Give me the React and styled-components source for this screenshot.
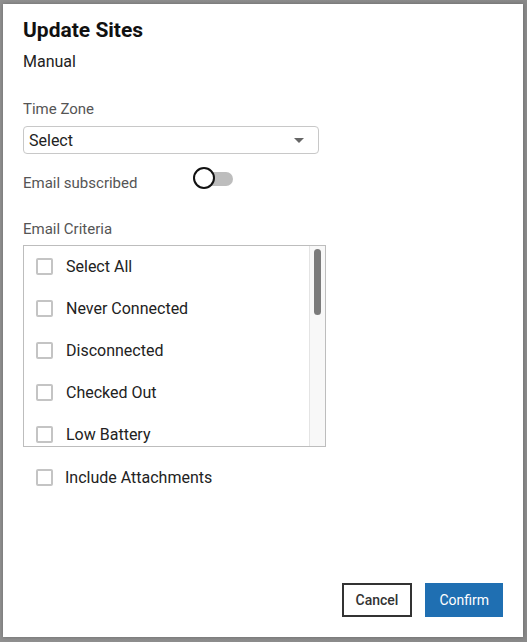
import React, { useState } from 'react';
import styled, { createGlobalStyle } from 'styled-components';

const GlobalStyle = createGlobalStyle`
  html, body {
    margin: 0;
    padding: 0;
    height: 100%;
  }
  body {
    font-family: Roboto, "Liberation Sans", Arial, sans-serif;
    background: #8c8c8c;
  }
`;

//Styled-Components
const Backdrop = styled.div`
  width: 527px;
  height: 642px;
  box-sizing: border-box;
  padding: 4px 4px 5px 3px;
  background: linear-gradient(to right, #909090 0%, #8a8a8a 100%);
  display: flex;
`;

const Dialog = styled.div`
  flex: 1;
  background: #fff;
  display: flex;
  flex-direction: column;
  padding: 14px 20px 20px 20px;
  box-shadow: 0 0 4px rgba(0, 0, 0, 0.25);
`;

const Title = styled.h2`
  margin: 0;
  font-size: 21px;
  font-weight: 700;
  color: #111;
  line-height: 24px;
`;

const SubTitle = styled.div`
  margin-top: 10px;
  font-size: 16px;
  color: #222;
  line-height: 20px;
`;

const Label = styled.div`
  font-size: 15px;
  color: #555;
  line-height: 18px;
  margin-top: ${p => p.top || 0}px;
`;

const SelectBox = styled.div`
  margin-top: 8px;
  width: 296px;
  height: 28px;
  box-sizing: border-box;
  border: 1px solid #c8c8c8;
  border-radius: 4px;
  display: flex;
  align-items: center;
  justify-content: space-between;
  padding: 0 14px 0 5px;
  font-size: 16px;
  color: #222;
`;

const Caret = styled.span`
  width: 0;
  height: 0;
  border-left: 5px solid transparent;
  border-right: 5px solid transparent;
  border-top: 5px solid #666;
`;

const ToggleRow = styled.div`
  margin-top: 13px;
  display: flex;
  align-items: center;
  height: 24px;
`;

const ToggleLabel = styled.div`
  font-size: 15px;
  color: #555;
  width: 170px;
  margin-top: 8px;
`;

const Track = styled.div`
  position: relative;
  width: 38px;
  height: 14px;
  border-radius: 7px;
  background: #bdbdbd;
  margin-left: 2px;
`;

const Knob = styled.div`
  position: absolute;
  left: -2px;
  top: -5px;
  width: 22px;
  height: 22px;
  box-sizing: border-box;
  border: 2px solid #111;
  border-radius: 50%;
  background: #fff;
`;

const ListBox = styled.div`
  margin-top: 7px;
  width: 303px;
  height: 202px;
  box-sizing: border-box;
  border: 1px solid #bdbdbd;
  display: flex;
  overflow: hidden;
`;

const ListItems = styled.div`
  flex: 1;
  display: flex;
  flex-direction: column;
  margin-top: -1px;
`;

const ScrollTrack = styled.div`
  width: 15px;
  background: #f8f8f8;
  border-left: 1px solid #e4e4e4;
  display: flex;
  justify-content: center;
  padding-top: 3px;
`;

const ScrollThumb = styled.div`
  width: 7px;
  height: 66px;
  border-radius: 4px;
  background: #7b7b7b;
`;

const CheckRow = styled.label`
  display: flex;
  align-items: center;
  height: 42px;
  flex-shrink: 0;
  margin-top: ${p => p.top || 0}px;
  padding-left: ${p => p.indent || 12}px;
  font-size: 16px;
  color: #222;
  cursor: pointer;
`;

const Box = styled.span`
  width: 17px;
  height: 17px;
  box-sizing: border-box;
  border: 2px solid #c4c4c4;
  border-radius: 2px;
  margin-right: ${p => p.gap || 13}px;
  background: ${p => (p.checked ? '#1f6fb2' : '#fff')};
`;

const Footer = styled.div`
  margin-top: auto;
  display: flex;
  justify-content: flex-end;
  gap: 13px;
`;

const Button = styled.button`
  height: 34px;
  box-sizing: border-box;
  padding: 0 12px;
  font-family: Roboto, "Liberation Sans", Arial, sans-serif;
  font-size: 14px;
  font-weight: ${p => (p.primary ? 400 : 500)};
  border: 2px solid ${p => (p.primary ? '#1f6fb2' : '#333')};
  background: ${p => (p.primary ? '#1f6fb2' : '#fff')};
  color: ${p => (p.primary ? '#fff' : '#333')};
  cursor: pointer;
`;

const criteria = ['Select All', 'Never Connected', 'Disconnected', 'Checked Out', 'Low Battery'];

const App = () => {
  const [checked, setChecked] = useState({});

  const toggle = name => {
    setChecked({ ...checked, [name]: !checked[name] });
  };

  return (
    <>
      <GlobalStyle />
      <Backdrop>
        <Dialog>
          <Title>Update Sites</Title>
          <SubTitle>Manual</SubTitle>

          <Label top={28}>Time Zone</Label>
          <SelectBox>
            Select
            <Caret />
          </SelectBox>

          <ToggleRow>
            <ToggleLabel>Email subscribed</ToggleLabel>
            <Track>
              <Knob />
            </Track>
          </ToggleRow>

          <Label top={29}>Email Criteria</Label>
          <ListBox>
            <ListItems>
              {criteria.map(c => (
                <CheckRow key={c} onClick={() => toggle(c)}>
                  <Box checked={checked[c]} />
                  {c}
                </CheckRow>
              ))}
            </ListItems>
            <ScrollTrack>
              <ScrollThumb />
            </ScrollTrack>
          </ListBox>

          <CheckRow top={9} indent={13} onClick={() => toggle('attachments')}>
            <Box gap={12} checked={checked.attachments} />
            Include Attachments
          </CheckRow>

          <Footer>
            <Button>Cancel</Button>
            <Button primary>Confirm</Button>
          </Footer>
        </Dialog>
      </Backdrop>
    </>
  );
};

export default App;
